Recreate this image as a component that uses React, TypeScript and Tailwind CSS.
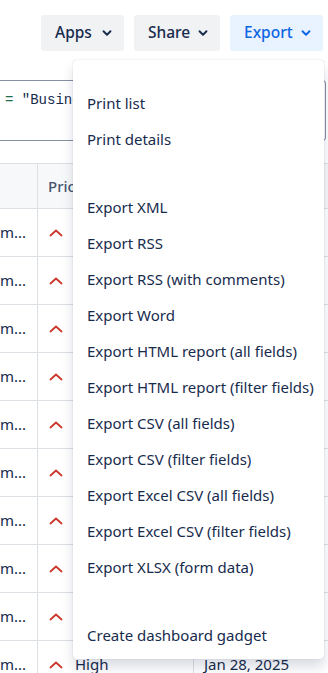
import { ChevronDown } from "lucide-react";

const menuGroups = [
  ["Print list", "Print details"],
  [
    "Export XML",
    "Export RSS",
    "Export RSS (with comments)",
    "Export Word",
    "Export HTML report (all fields)",
    "Export HTML report (filter fields)",
    "Export CSV (all fields)",
    "Export CSV (filter fields)",
    "Export Excel CSV (all fields)",
    "Export Excel CSV (filter fields)",
    "Export XLSX (form data)",
  ],
  ["Create dashboard gadget"],
];

const rows = Array.from({ length: 10 }, (_, i) => i);

function PriorityHigh() {
  return (
    <svg width="14" height="8" viewBox="0 0 14 8" className="shrink-0">
      <path d="M1.5 6.5 L7 1.5 L12.5 6.5" fill="none" stroke="#c9372c" strokeWidth="1.8" strokeLinecap="round" strokeLinejoin="round" />
    </svg>
  );
}

function ToolButton({ label, active, width }: { label: string; active?: boolean; width: string }) {
  return (
    <button
      className={`${width} h-9 rounded-[3px] flex items-center justify-between pl-[14px] pr-[10px] text-[15.5px] font-medium ${
        active ? "bg-[#e9f2ff] text-[#0c66e4]" : "bg-[#f1f2f4] text-[#172b4d]"
      }`}
    >
      <span>{label}</span>
      <ChevronDown size={14} strokeWidth={3.2} />
    </button>
  );
}

export default function App() {
  return (
    <div className="relative w-[328px] h-[673px] overflow-hidden bg-white text-[#172b4d] font-['Segoe_UI','Noto_Sans',sans-serif]">
      {/* Toolbar */}
      <div className="flex justify-end gap-[10px] pt-[15px] pr-[5px]">
        <ToolButton label="Apps" width="w-[83px]" />
        <ToolButton label="Share" width="w-[86px]" />
        <ToolButton label="Export" width="w-[93px]" active />
      </div>

      {/* JQL editor */}
      <div className="mt-[29px] mr-[2px] h-[61px] border border-l-0 border-[#8590a2] rounded-r-[4px] pl-[5px] pt-[9px] font-['Liberation_Mono',monospace] text-[14px] whitespace-nowrap overflow-hidden">
        <span className="text-[#216e4e]">=</span> <span className="text-[#172b4d]">"Business"</span>
      </div>

      {/* Issue table */}
      <div className="mt-[22px] border-t border-[#dcdfe4] text-[15px]">
        <div className="flex h-[45px] bg-[#f7f8f9] border-b border-[#dcdfe4]">
          <div className="w-[38px] border-r border-[#dcdfe4]" />
          <div className="flex-1 flex items-center pl-[10px] font-medium text-[#44546f]">Priority</div>
        </div>
        {rows.map((i) => (
          <div key={i} className="flex h-[48px] border-b border-[#dcdfe4]">
            <div className="w-[38px] border-r border-[#dcdfe4] flex items-center overflow-hidden whitespace-nowrap">
              <span>m...</span>
            </div>
            <div className="w-[156px] border-r border-[#dcdfe4] flex items-center gap-[12px] pl-[11px]">
              <PriorityHigh />
              <span>High</span>
            </div>
            <div className="flex-1 flex items-center pl-[10px] whitespace-nowrap">Jan 28, 2025</div>
          </div>
        ))}
      </div>

      {/* Export dropdown */}
      <div className="absolute left-[73px] top-[60px] w-[251px] bg-white rounded-[4px] shadow-[0_8px_12px_rgba(9,30,66,0.15),0_0_1px_rgba(9,30,66,0.31)] pt-[25px] pb-[6px] flex flex-col gap-[32px]">
        {menuGroups.map((group, gi) => (
          <div key={gi} className="flex flex-col">
            {group.map((item) => (
              <div key={item} className="h-9 flex items-center px-[14px] text-[15px] text-[#172b4d] whitespace-nowrap">
                {item}
              </div>
            ))}
          </div>
        ))}
      </div>
    </div>
  );
}
